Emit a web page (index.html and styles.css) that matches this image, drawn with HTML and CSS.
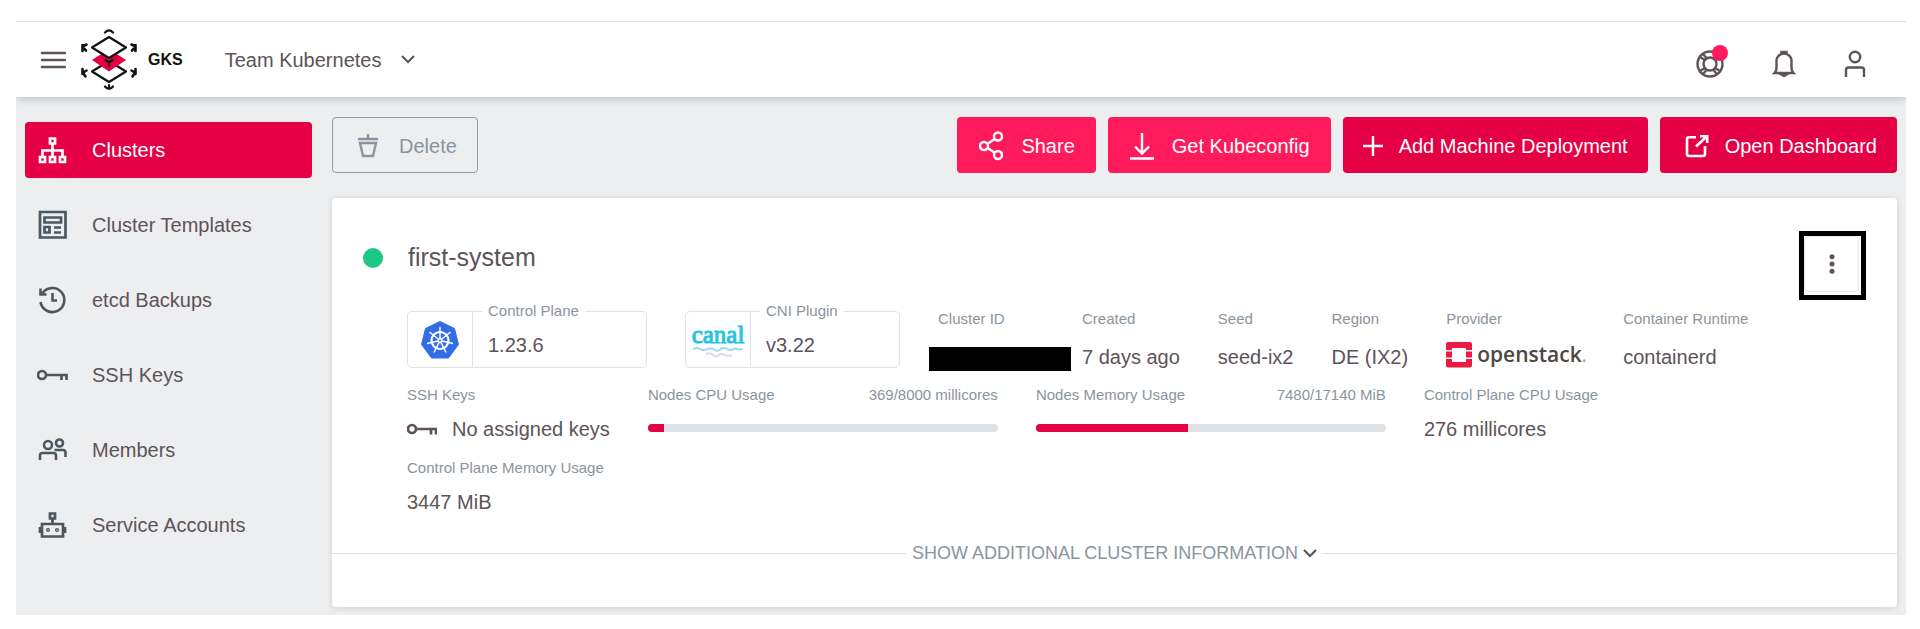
FILE: index.html
```html
<!DOCTYPE html>
<html lang="en">
<head>
<meta charset="utf-8">
<title>GKS – first-system</title>
<link rel="stylesheet" href="styles.css">
</head>
<body>
<div class="app">
  <header class="topbar">
    <button class="icon-button" type="button" aria-label="Toggle menu">
      <svg width="26" height="18" viewBox="0 0 26 18" fill="none" stroke="currentColor" stroke-width="2.4" stroke-linecap="round"><path d="M2 2h23M2 9h23M2 16h23"/></svg>
    </button>
    <a class="brand" href="#">
      <svg width="58" height="62" viewBox="0 0 58 62" fill="none" stroke="#111" stroke-width="2.200" stroke-linejoin="round" stroke-linecap="round">
        <path d="M12 42.500 29 32l17 10.500L29 53z"/>
        <path d="M12 31 29 20l17 11-17 11.500z" fill="#e50045" stroke="none"/>
        <path d="M12 18.500 29 8l17 10.500L29 29z" fill="#fff"/>
        <path d="M25.500 31l3.500 2.500 3.500-2.500M29 33.500v3.500"/>
        <path d="M25 3.500q4-4 8 0M25 57.500q4 4.500 8 0M29 56v4"/>
        <path d="M2.500 16v6M6.500 15.500l-4 2M2.500 18l3.500 3.500M55.500 16v6M51.500 15.500l4 2M55.500 18 52 21.500M2.500 40v5M6.500 41.500l-4 2.500M2.500 43l3 4.500M55.500 40v5M51.500 41.500l4 2.500M55.500 43l-3 4.500" stroke-width="2.600"/>
      </svg>
      <span class="brand-name">GKS</span>
    </a>
    <button class="project" type="button">Team Kubernetes
      <svg width="14" height="9" viewBox="0 0 14 9" fill="none" stroke="currentColor" stroke-width="2"><path d="M1 1l6 6 6-6"/></svg>
    </button>
    <div class="top-actions">
      <button class="icon-button help" type="button" aria-label="Help">
        <svg width="28" height="28" viewBox="0 0 28 28" fill="none" stroke="currentColor" stroke-width="2.400"><circle cx="14" cy="14" r="12.500"/><circle cx="14" cy="14" r="6.500"/><path d="M4 7l5 3M7 4l3.500 4M24 7l-5 3M4 21l5-3M7 24l3.500-4M24 21l-5-3M21 24l-3.500-4"/></svg>
        <span class="badge"></span>
      </button>
      <button class="icon-button" type="button" aria-label="Notifications">
        <svg width="24" height="28" viewBox="0 0 24 28" fill="none" stroke="currentColor" stroke-width="2.400"><path d="M2.500 23q2-2 2-5v-7a7.500 7.500 0 0 1 15 0v7q0 3 2 5z"/><path d="M9.500 3h5v-1h-5zM9.500 24.500h5L12 26z"/></svg>
      </button>
      <button class="icon-button" type="button" aria-label="Account">
        <svg width="22" height="28" viewBox="0 0 22 28" fill="none" stroke="currentColor" stroke-width="2.400"><circle cx="11" cy="7" r="5.200"/><path d="M2 27v-7q0-2.500 2.500-2.500h13q2.500 0 2.500 2.500v7"/></svg>
      </button>
    </div>
  </header>

  <div class="body">
    <nav class="sidebar" aria-label="Project">
      <a class="nav-link active" href="#">
        <svg width="30" height="30" viewBox="0 0 30 30" fill="none" stroke="currentColor" stroke-width="2.700"><path d="M12 3.500h5v5h-5zM2 22h5v5H2zM12 22h5v5h-5zM22 22h5v5h-5zM14.500 8.500V22M4.500 22v-6.500h20V22"/></svg>
        Clusters</a>
      <a class="nav-link" href="#">
        <svg width="30" height="30" viewBox="0 0 30 30" fill="none" stroke="currentColor" stroke-width="2.700"><path d="M2 2h25.500v25.500H2zM6.500 7.500H23v5H6.500zM6.500 17h5v5.500h-5zM16 17.500h7M16 22.500h7"/></svg>
        Cluster Templates</a>
      <a class="nav-link" href="#">
        <svg width="30" height="30" viewBox="0 0 30 30" fill="none" stroke="currentColor" stroke-width="2.600"><path d="M4 9A12 12 0 1 1 2.500 17M2.500 3.500v6H8.500M14.500 8v7.500h4.500"/></svg>
        etcd Backups</a>
      <a class="nav-link" href="#">
        <svg class="key" width="32" height="30" viewBox="0 0 32 30" fill="none" stroke="currentColor" stroke-width="2.700"><circle cx="5" cy="15" r="4"/><path d="M9 15H29.500v5M24.500 15v5"/></svg>
        SSH Keys</a>
      <a class="nav-link" href="#">
        <svg width="30" height="30" viewBox="0 0 30 30" fill="none" stroke="currentColor" stroke-width="2.600"><circle cx="10" cy="10" r="4"/><circle cx="21.500" cy="8" r="3.500"/><path d="M2 25v-4.500q0-2.500 2.500-2.500h11q2.500 0 2.500 2.500V25M16.500 15h8.500q2.500 0 2.500 2.500V22"/></svg>
        Members</a>
      <a class="nav-link" href="#">
        <svg width="30" height="30" viewBox="0 0 30 30" fill="none" stroke="currentColor" stroke-width="2.700"><path d="M12 3.500h5v5h-5zM14.500 8.500V13M4 14h21v12.500H4zM2 17v6M27 17v6"/><circle cx="10" cy="20" r=".7"/><circle cx="19" cy="20" r=".7"/></svg>
        Service Accounts</a>
    </nav>

    <main class="content">
      <div class="toolbar">
        <button class="btn outline" type="button">
          <svg width="24" height="24" viewBox="0 0 24 24" fill="none" stroke="currentColor" stroke-width="2.400"><path d="M1 5h20M11 0v4M3 9h16l-3 13H6z"/></svg>
          Delete</button>
        <div class="toolbar-end">
          <button class="btn light" type="button">
            <svg width="24" height="30" viewBox="0 0 24 30" fill="none" stroke="currentColor" stroke-width="2.400"><circle cx="5" cy="15" r="4"/><circle cx="19" cy="5.500" r="4"/><circle cx="19" cy="24" r="4"/><path d="M8.500 13l7-5M8.500 17l7 4.500"/></svg>
            Share</button>
          <button class="btn light" type="button">
            <svg width="24" height="28" viewBox="0 0 24 28" fill="none" stroke="currentColor" stroke-width="2.400"><path d="M12 1v20M5 14.500l7 7 7-7M0 26.500h24"/></svg>
            Get Kubeconfig</button>
          <button class="btn add" type="button">
            <svg width="20" height="20" viewBox="0 0 20 20" fill="none" stroke="currentColor" stroke-width="2.400"><path d="M10 0v20M0 10h20"/></svg>
            Add Machine Deployment</button>
          <button class="btn" type="button">
            <svg width="24" height="24" viewBox="0 0 24 24" fill="none" stroke="currentColor" stroke-width="2.600"><path d="M11 3.200H4Q2 3.200 2 5.200V20q0 2 2 2h14q2 0 2-2v-8M15 2.200h7.200V9M22 2.200 11 12.500"/></svg>
            Open Dashboard</button>
        </div>
      </div>

      <section class="card">
        <div class="card-head">
          <span class="status"></span>
          <h1>first-system</h1>
          <div class="highlight">
            <button class="kebab" type="button" aria-label="More actions">
              <svg width="6" height="20" viewBox="0 0 6 20" fill="currentColor"><circle cx="3" cy="2.700" r="2.500"/><circle cx="3" cy="10" r="2.500"/><circle cx="3" cy="17.300" r="2.500"/></svg>
            </button>
          </div>
        </div>

        <div class="properties">
          <div class="chip chip-wide">
            <div class="chip-logo">
              <svg width="38" height="38" viewBox="0 0 38 38"><path d="M19 .5 33.500 7.500 37.500 23.500 27.500 37H10.500L.5 23.500 4.500 7.500z" fill="#326de6" stroke="#326de6" stroke-linejoin="round"/><g fill="none" stroke="#fff"><circle cx="19" cy="19.500" r="8.500" stroke-width="2.200"/><path stroke-width="1.500" d="M19 6v13.500L29.500 11M19 19.500 8.500 11M19 19.500l13 3M19 19.500l-13 3M19 19.500l6 12M19 19.500l-6 12"/></g><circle cx="19" cy="19.500" r="2.500" fill="#fff"/><circle cx="19" cy="19.500" r="1" fill="#326de6"/></svg>
            </div>
            <div class="chip-text"><span class="legend">Control Plane</span><span class="value">1.23.6</span></div>
          </div>
          <div class="chip chip-narrow">
            <div class="chip-logo canal">
              <span>canal</span>
              <svg width="50" height="10" viewBox="0 0 50 10" fill="none" stroke-width="2"><path stroke="#9edbee" d="M0 2q4-2 7 0t7 0M14 2.500q4-2.500 7 0t7 0M27 2q4-2 7 0t7 0M38 3q3-2 6-1t6 0"/><path stroke="#d5deed" d="M13 7q4-2 7 1t7-1M25 8q4-2 7 0t7 0"/></svg>
            </div>
            <div class="chip-text"><span class="legend">CNI Plugin</span><span class="value">v3.22</span></div>
          </div>
          <div class="property top cluster-id"><span class="label">Cluster ID</span><span class="redacted"></span></div>
          <div class="property top"><span class="label">Created</span><span class="value">7 days ago</span></div>
          <div class="property top"><span class="label">Seed</span><span class="value">seed-ix2</span></div>
          <div class="property top"><span class="label">Region</span><span class="value">DE (IX2)</span></div>
          <div class="property top provider"><span class="label">Provider</span>
            <span class="openstack">
              <svg width="26" height="26" viewBox="0 0 26 26" fill="#ed1944"><path d="M2 0h22q2 0 2 2v6h-6V6H6v2H0V2q0-2 2-2zM0 9.500h6v6H0zM20 9.500h6v6h-6zM0 17h6v3h14v-3h6v6.500q0 2-2 2H2q-2 0-2-2z"/></svg>
              <span class="openstack-name">openstack<small>.</small></span>
            </span>
          </div>
          <div class="property top"><span class="label">Container Runtime</span><span class="value">containerd</span></div>

          <div class="property"><span class="label">SSH Keys</span>
            <span class="value keys"><svg width="30" height="14" viewBox="0 0 30 14" fill="none" stroke="currentColor" stroke-width="2.700"><circle cx="5" cy="7" r="4"/><path d="M9 7h20v5.500M24 7v5.500"/></svg>No assigned keys</span></div>
          <div class="property meter">
            <div class="label meter-head"><span>Nodes CPU Usage</span><span>369/8000 millicores</span></div>
            <div class="track"><div class="fill" style="width: 4.6%"></div></div>
          </div>
          <div class="property meter">
            <div class="label meter-head"><span>Nodes Memory Usage</span><span>7480/17140 MiB</span></div>
            <div class="track"><div class="fill" style="width: 43.6%"></div></div>
          </div>
          <div class="property"><span class="label">Control Plane CPU Usage</span><span class="value">276 millicores</span></div>
          <div class="property"><span class="label">Control Plane Memory Usage</span><span class="value">3447 MiB</span></div>
        </div>

        <button class="expander" type="button">SHOW ADDITIONAL CLUSTER INFORMATION
          <svg width="14" height="9" viewBox="0 0 14 9" fill="none" stroke="#5d5358" stroke-width="2.200"><path d="M1 1l6 6 6-6"/></svg>
        </button>
      </section>
    </main>
  </div>
</div>
</body>
</html>
```
FILE: styles.css
```css
* { box-sizing: border-box; }

body {
  margin: 0;
  padding: 21px 14px 14px 16px;
  background: #fff;
  color: #5d5358;
  font: 20px/24px "Liberation Sans", Arial, sans-serif;
}

svg { display: block; flex: none; }
button { font: inherit; color: inherit; background: none; border: 0; padding: 0; }
a { color: inherit; text-decoration: none; }

.app { background: #edeef0; }

.topbar {
  display: flex;
  align-items: center;
  height: 76px;
  padding: 0 40px 0 24px;
  background: #fff;
  border-top: 1px solid #dfe1e3;
  box-shadow: 0 2px 8px #0003;
  clip-path: inset(0 0 -12px 0);
}
.brand { display: flex; align-items: center; gap: 10px; margin-left: 14px; color: #111; }
.brand-name { font-size: 16px; font-weight: 700; }
.project { display: flex; align-items: center; gap: 20px; margin-left: 42px; }
.top-actions { display: flex; align-items: center; gap: 48px; margin-left: auto; padding-top: 8px; }
.help { position: relative; }
.badge {
  position: absolute;
  top: -5px;
  right: -4px;
  width: 16px;
  height: 16px;
  border-radius: 50%;
  background: #ff1a5b;
}

.body { display: flex; gap: 20px; padding: 20px 9px 8px; }
.sidebar { display: flex; flex-direction: column; gap: 19px; width: 287px; padding-top: 5px; flex: none; }
.nav-link {
  display: grid;
  grid-template-columns: 30px 1fr;
  gap: 24px;
  align-items: center;
  height: 56px;
  padding-left: 13px;
  border-radius: 4px;
}
.nav-link svg { color: #4d575e; }
.nav-link .key { justify-self: center; }
.nav-link.active, .nav-link.active svg { color: #fff; }
.nav-link.active { background: #e50045; }

.content { flex: 1; min-width: 0; }
.toolbar, .toolbar-end { display: flex; gap: 12px; }
.toolbar { justify-content: space-between; }
.btn {
  display: flex;
  align-items: center;
  gap: 16px;
  height: 56px;
  padding: 2px 20px 0 25px;
  border-radius: 4px;
  background: #e50045;
  color: #fff;
}
.btn.light { gap: 18px; padding: 2px 21px 0 22px; background: #ff1a5b; }
.btn.add { padding: 2px 20px 0; }
.btn.outline { gap: 18px; padding: 1px 20px 0 24px; border: 1px solid #929ba3; background: none; color: #8b949c; }

.card {
  margin-top: 25px;
  padding-top: 33px;
  padding-bottom: 42px;
  border-radius: 4px;
  background: #fff;
  box-shadow: 0 1px 6px #0002;
}
.card-head { display: flex; align-items: flex-start; padding: 0 31px; }
.status { width: 20px; height: 20px; margin: 17px 25px 0 0; border-radius: 50%; background: #1ec882; }
.card h1 { margin: 10px 0 0; font-size: 25px; line-height: 32px; font-weight: 400; }
.highlight { margin-left: auto; border: 5px solid #000; padding: 0 2px 3px 0; }
.kebab { display: grid; place-items: center; width: 55px; height: 56px; border: 1px solid #e3e5e7; border-radius: 4px; }

.properties { display: flex; flex-wrap: wrap; column-gap: 38px; padding: 11px 98px 0 75px; }
.property { display: flex; flex-direction: column; gap: 14px; height: 73px; }
.property.top { height: 76px; gap: 18px; }
.label { color: #8b949c; font-size: 15px; line-height: 16px; }
.chip { display: flex; height: 57px; border: 1px solid #dfe1e3; border-radius: 5px; }
.chip-wide { width: 240px; }
.chip-narrow { width: 215px; }
.chip-logo { display: grid; place-items: center; width: 65px; border-right: 1px solid #dfe1e3; }
.chip-logo.canal { place-content: center; color: #25c3df; font: 25px/24px "Liberation Serif", serif; -webkit-text-stroke: 1px #25c3df; }
.chip-text { display: flex; flex-direction: column; gap: 13px; margin-top: -10px; padding-left: 9px; }
.legend { padding: 0 6px; background: #fff; color: #8b949c; font-size: 15px; line-height: 18px; }
.chip-text .value { padding-left: 6px; }
.cluster-id { position: relative; width: 106px; }
.redacted { position: absolute; top: 36px; left: -9px; width: 142px; height: 24px; background: #000; }
.property.provider { gap: 15px; width: 139px; }
.openstack { display: flex; gap: 5px; color: #51473f; font: 600 21px/24px "Open Sans", sans-serif; }
.openstack-name small { color: #a59e99; }
.keys { display: flex; align-items: center; gap: 15px; }
.meter { width: 350px; }
.meter-head { display: flex; justify-content: space-between; }
.track { height: 8px; margin-top: 7px; border-radius: 4px; background: #dfe2e5; overflow: hidden; }
.fill { height: 100%; background: #e50045; }

.expander {
  display: flex;
  align-items: center;
  gap: 5px;
  width: 100%;
  margin-top: 8px;
  color: #8b949c;
  font-size: 18px;
}
.expander::before, .expander::after { content: ""; flex: 1; height: 1px; background: #dfe1e3; }
```
